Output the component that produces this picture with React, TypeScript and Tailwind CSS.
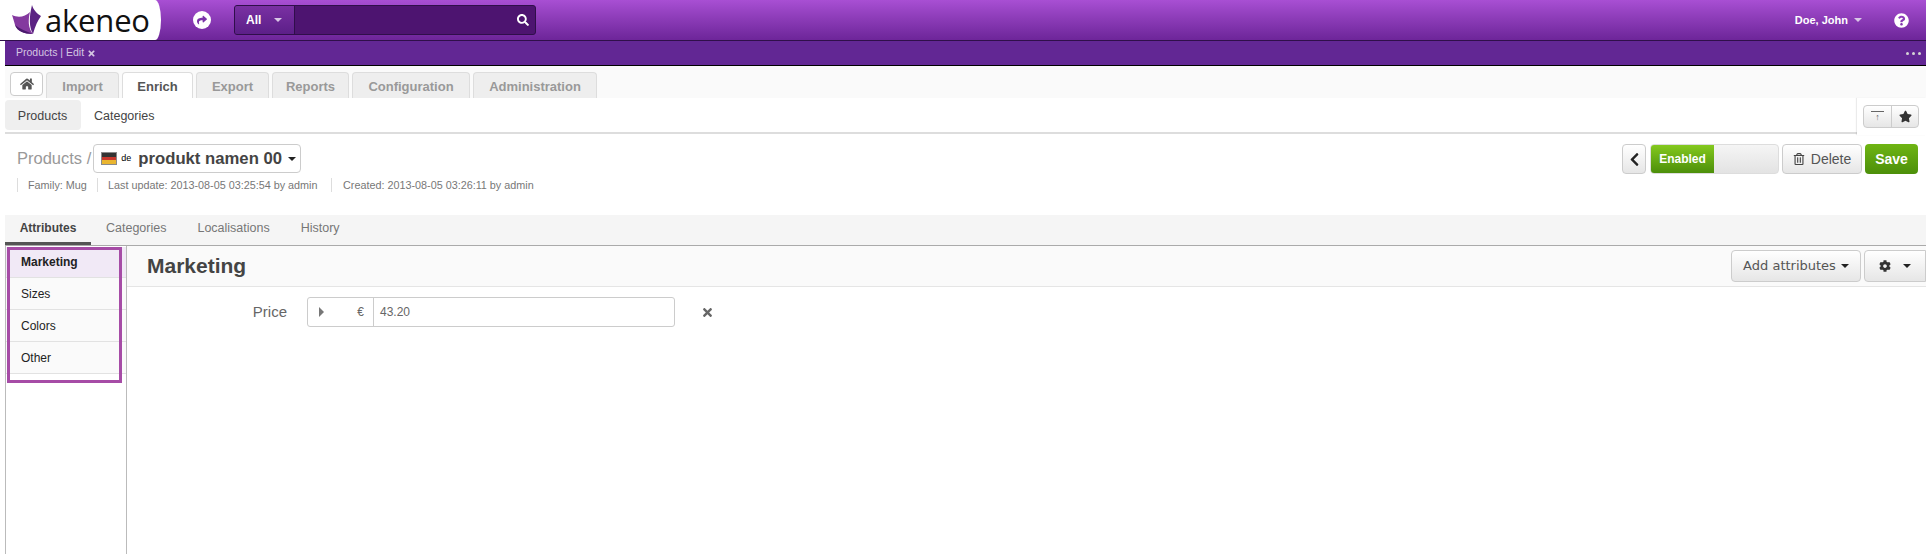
import { FaChevronLeft, FaCog, FaHome, FaQuestionCircle, FaSearch, FaShare, FaStar, FaTimes, FaRegTrashAlt } from "react-icons/fa";

const mainTabs = [
  { label: "Import", w: "w-[73px]" },
  { label: "Enrich", w: "w-[71px]", active: true },
  { label: "Export", w: "w-[73px]" },
  { label: "Reports", w: "w-[77px]" },
  { label: "Configuration", w: "w-[118px]" },
  { label: "Administration", w: "w-[124px]" },
];

const groups = ["Marketing", "Sizes", "Colors", "Other"];

function Caret({ className }: { className: string }) {
  return <span className={`inline-block h-0 w-0 border-x-[4px] border-t-[4px] border-x-transparent ${className}`} />;
}

function Logo() {
  return (
    <svg width="30" height="30" viewBox="0 0 30 30">
      <path d="M20 0 C21 4 25 9 29 11 C26 15 23 21 21 29 C17 22 17 12 20 0 Z" fill="#5b2283" />
      <path d="M0 10 C6 13 13 12 18 7 C16 15 16 23 21 29 C12 29 5 26 3 20 C2 16 1 13 0 10 Z" fill="#84399f" />
      <path d="M3 20 C8 24 14 26 21 29 C12 29 5 26 3 20 Z" fill="#4a1a6d" />
    </svg>
  );
}

function GermanFlag() {
  return (
    <svg width="16" height="13" viewBox="0 0 16 13">
      <rect width="16" height="13" fill="#8a8a8a" />
      <rect x="1" y="1" width="14" height="4" fill="#333" />
      <rect x="1" y="5" width="14" height="3" fill="#c8372c" />
      <rect x="1" y="8" width="14" height="4" fill="#e9b52f" />
    </svg>
  );
}

export default function App() {
  return (
    <div className="flex h-[554px] w-[1926px] flex-col overflow-hidden bg-white font-['Liberation_Sans',Arial,sans-serif]">
      {/* top bar */}
      <header className="flex h-[41px] shrink-0 items-center border-b border-[#2f0f4a] bg-gradient-to-b from-[#a84fd3] to-[#6d2599]">
        <div className="flex h-[40px] w-[161px] shrink-0 items-center gap-[3px] bg-white pl-[12px] [border-bottom-right-radius:6px_20px] [border-top-right-radius:6px_20px]">
          <Logo />
          <span className="font-['Open_Sans',sans-serif] text-[31px] leading-none tracking-[-0.2px] text-[#111]">akeneo</span>
        </div>
        <span className="ml-[32px] flex h-[18px] w-[18px] items-center justify-center rounded-full bg-white text-[10px] text-[#7a33a8]">
          <FaShare />
        </span>
        <div className="ml-[23px] flex h-[30px] w-[302px] overflow-hidden rounded-[3px] border border-[#2f0f4a] bg-[#4d1470]">
          <div className="flex w-[60px] items-center gap-[13px] border-r border-[#2f0f4a] bg-gradient-to-b from-[#7a30a3] to-[#5c1f88] pl-[11px] text-[12px] font-bold text-white">
            All
            <Caret className="border-t-[#d9c8e6]" />
          </div>
          <div className="flex flex-1 items-center justify-end pr-[6px] text-[12px] text-white">
            <FaSearch />
          </div>
        </div>
        <div className="ml-auto flex items-center text-[11px] font-bold text-white">
          Doe, John
          <Caret className="ml-[6px] border-t-[#d9c8e6]" />
          <FaQuestionCircle className="mr-[17px] ml-[32px] text-[15px]" />
        </div>
      </header>

      <div className="flex min-h-0 flex-1 flex-col pl-[5px]">
        {/* pinned bar */}
        <div className="flex h-[25px] shrink-0 items-center justify-between border-b border-black bg-[#622794] pr-[5px] pl-[11px] text-[10.5px] text-[#d5c6e2]">
          <span className="flex items-center gap-[3px]">
            Products | Edit
            <FaTimes className="text-[9px]" />
          </span>
          <span className="flex gap-[3px]">
            <i className="h-[3px] w-[3px] rounded-full bg-[#d5d5d5]" />
            <i className="h-[3px] w-[3px] rounded-full bg-[#d5d5d5]" />
            <i className="h-[3px] w-[3px] rounded-full bg-[#d5d5d5]" />
          </span>
        </div>

        {/* main tabs */}
        <nav className="flex h-[32px] shrink-0 items-end gap-[3px] bg-[#fafafa] pl-[5px]">
          <div className="mb-[2px] flex h-[24px] w-[33px] items-center justify-center rounded-[4px] border border-[#ccc] bg-white text-[14px] text-[#555]">
            <FaHome />
          </div>
          {mainTabs.map((tab) => (
            <div
              key={tab.label}
              className={`flex h-[26px] items-center justify-center rounded-t-[4px] border border-b-0 border-[#ddd] pt-[2px] text-[13px] font-bold ${tab.w} ${tab.active ? "bg-white text-[#555]" : "bg-[#eeeeee] text-[#999]"}`}
            >
              {tab.label}
            </div>
          ))}
        </nav>

        {/* sub nav */}
        <div className="relative flex h-[36px] shrink-0 items-center border-b-2 border-[#ddd] text-[12.5px] text-[#444]">
          <span className="flex h-[30px] w-[76px] items-center justify-center rounded-[4px] bg-[#efefef] pt-[2px] pr-[1px]">Products</span>
          <span className="ml-[13px] pt-[3px]">Categories</span>
          <div className="absolute top-0 right-0 flex h-[37px] w-[69px] items-start bg-white pt-[7px] pl-[6px] shadow-[-1px_0_1px_rgba(0,0,0,0.08)]">
            <div className="flex h-[23px] w-[56px] overflow-hidden rounded-[4px] border border-[#ccc] bg-gradient-to-b from-white to-[#e6e6e6]">
              <span className="flex w-[28px] flex-col items-center border-r border-[#ccc] pt-[5px]">
                <i className="h-[1px] w-[13px] bg-[#666]" />
                <span className="mt-[1px] text-[9px] leading-[9px] text-[#666]">↑</span>
              </span>
              <span className="flex flex-1 items-center justify-center text-[13px] text-[#333]">
                <FaStar />
              </span>
            </div>
          </div>
        </div>

        {/* page header */}
        <div className="flex h-[81px] shrink-0 items-start justify-between pt-[10px] pr-[8px]">
          <div className="pl-[12px]">
            <div className="flex h-[29px] items-center">
              <span className="text-[16.5px] text-[#999]">Products /</span>
              <div className="ml-[2px] flex h-[29px] w-[208px] items-center rounded-[4px] border border-[#ccc] pl-[7px] text-[#444]">
                <GermanFlag />
                <span className="ml-[4px] text-[9px] text-black">de</span>
                <span className="ml-[7px] text-[16.7px] font-bold">produkt namen 00</span>
                <Caret className="ml-[6px] border-t-[#222]" />
              </div>
            </div>
            <div className="mt-[5px] flex h-[14px] items-center text-[10.8px] text-[#777]">
              <span className="w-[80px] border-l border-[#ddd] pl-[10px] leading-[14px]">Family: Mug</span>
              <span className="w-[234px] border-l border-[#ddd] pl-[10px] leading-[14px]">Last update: 2013-08-05 03:25:54 by admin</span>
              <span className="border-l border-[#ddd] pl-[11px] leading-[14px]">Created: 2013-08-05 03:26:11 by admin</span>
            </div>
          </div>
          <div className="flex h-[30px] items-stretch">
            <button className="flex w-[24px] items-center justify-center rounded-[4px] border border-[#ccc] bg-gradient-to-b from-white to-[#e6e6e6] text-[15px] text-[#222]">
              <FaChevronLeft />
            </button>
            <div className="ml-[4px] flex w-[129px] overflow-hidden rounded-[4px] border border-[#ddd] bg-gradient-to-b from-[#f5f5f5] to-[#e3e3e3]">
              <span className="flex w-[63px] items-center justify-center bg-gradient-to-b from-[#84c91e] to-[#4c8f0a] text-[12px] font-bold text-white">Enabled</span>
            </div>
            <button className="ml-[3px] flex w-[80px] items-center justify-center gap-[6px] rounded-[4px] border border-[#ccc] bg-gradient-to-b from-white to-[#e6e6e6] text-[14px] text-[#555]">
              <FaRegTrashAlt className="text-[12px] text-[#444]" />
              Delete
            </button>
            <button className="ml-[3px] flex w-[53px] items-center justify-center rounded-[4px] bg-gradient-to-b from-[#6fb513] to-[#4c8f0a] text-[14px] font-bold text-white">Save</button>
          </div>
        </div>

        {/* form tabs */}
        <div className="flex h-[31px] shrink-0 items-stretch border-b border-[#aaa] bg-[#f5f5f5] pb-[3px] text-[12.5px] text-[#777]">
          <span className="-mb-[3px] flex w-[86px] items-center justify-center border-b-[3px] border-[#555] pb-[1px] text-[12px] font-bold text-[#444]">Attributes</span>
          <span className="ml-[15px] flex items-center">Categories</span>
          <span className="ml-[31px] flex items-center">Localisations</span>
          <span className="ml-[31px] flex items-center">History</span>
        </div>

        {/* body */}
        <div className="flex min-h-0 flex-1">
          <aside className="relative w-[122px] shrink-0 border-x border-[#bbb] bg-white text-[12px] text-[#222]">
            <div className="absolute top-[1px] left-[1px] h-[136px] w-[115px] border-[3px] border-[#a64ca6]" />
            <div className="h-[1px]" />
            {groups.map((g, i) => (
              <div
                key={g}
                className={`flex items-center border-b border-[#e2e2e2] pl-[15px] ${i === 0 ? "h-[31px] bg-[#f1e9f6] font-bold" : "h-[32px] bg-[#fafafa]"}`}
              >
                {g}
              </div>
            ))}
          </aside>
          <main className="min-w-0 flex-1">
            <div className="flex h-[41px] items-center justify-between border-b border-[#e5e5e5] bg-[#fafafa] pl-[20px]">
              <h1 className="text-[21px] font-bold text-[#444]">Marketing</h1>
              <div className="flex h-[32px] items-stretch gap-[3px]">
                <button className="flex w-[130px] items-center justify-center gap-[5px] rounded-[4px] border border-[#ccc] bg-gradient-to-b from-white to-[#e6e6e6] font-['DejaVu_Sans',sans-serif] text-[13px] text-[#555]">
                  Add attributes
                  <Caret className="border-t-[#222]" />
                </button>
                <button className="flex w-[62px] items-center justify-center gap-[12px] rounded-l-[4px] border border-[#ccc] bg-gradient-to-b from-white to-[#e6e6e6] text-[12px] text-[#333]">
                  <FaCog />
                  <Caret className="border-t-[#222]" />
                </button>
              </div>
            </div>
            <div className="mt-[10px] flex items-center">
              <label className="w-[160px] text-right text-[15px] text-[#666]">Price</label>
              <div className="ml-[20px] flex h-[30px] w-[368px] overflow-hidden rounded-[3px] border border-[#ccc] text-[12px] text-[#666]">
                <span className="flex w-[66px] items-center justify-between border-r border-[#ccc] pr-[9px] pl-[11px]">
                  <span className="h-0 w-0 border-y-[5px] border-l-[5px] border-y-transparent border-l-[#777]" />
                  €
                </span>
                <span className="flex items-center pl-[6px]">43.20</span>
              </div>
              <FaTimes className="ml-[26px] text-[13px] text-[#666]" />
            </div>
          </main>
        </div>
      </div>
    </div>
  );
}
